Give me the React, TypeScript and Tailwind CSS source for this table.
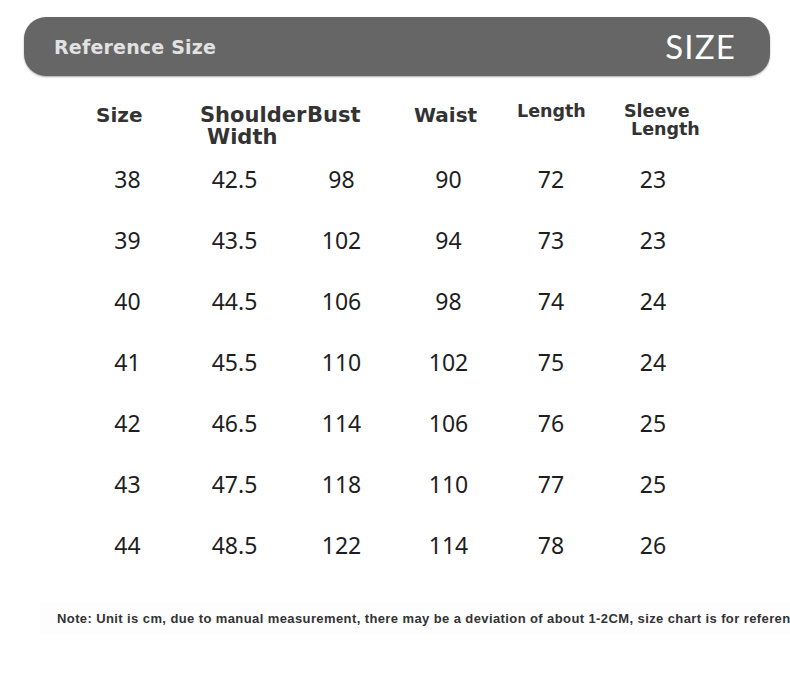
import React from "react";

const rows = [
  ["38", "42.5", "98", "90", "72", "23"],
  ["39", "43.5", "102", "94", "73", "23"],
  ["40", "44.5", "106", "98", "74", "24"],
  ["41", "45.5", "110", "102", "75", "24"],
  ["42", "46.5", "114", "106", "76", "25"],
  ["43", "47.5", "118", "110", "77", "25"],
  ["44", "48.5", "122", "114", "78", "26"],
];

const cols = "grid grid-cols-[107px_107px_107px_107px_98px_106px]";
const heavy = { fontFamily: '"DejaVu Sans", "Liberation Sans", sans-serif' };

export default function App() {
  return (
    <div className="w-[790px] h-[695px] bg-white overflow-hidden relative">
      <div className="pt-[17px] pl-[24px]">
        <div className="h-[59px] w-[746px] rounded-[22px] bg-[#666666] shadow-[0_1px_2px_rgba(0,0,0,0.35)] flex items-center justify-between pl-[30px] pr-[34px]">
          <span className="text-[19px] font-bold text-[#e2e2e2] tracking-[0.2px] mt-[1px]" style={heavy}>
            Reference Size
          </span>
          <span
            className="text-[33px] text-white tracking-[1.2px] font-normal mt-[1px]"
            style={{ fontFamily: 'Lato, "Open Sans", sans-serif' }}
          >
            SIZE
          </span>
        </div>
      </div>

      <div className="ml-[74px] mt-[12px]">
        <div className={`${cols} h-[61px] text-[#333333] font-bold whitespace-nowrap`} style={heavy}>
          <div className="pl-[22px] pt-[16px] text-[20px] leading-[22px]">Size</div>
          <div className="pl-[19px] pt-[16px] text-[21px] leading-[22px] relative z-0">
            <div>Shoulder</div>
            <div className="pl-[7px]">Width</div>
          </div>
          <div className="pl-[19px] pt-[16px] text-[21px] leading-[22px] relative z-10">Bust</div>
          <div className="pl-[19px] pt-[16px] text-[20px] leading-[22px]">Waist</div>
          <div className="pl-[15px] pt-[14px] text-[17.5px] leading-[18px]">Length</div>
          <div className="pl-[24px] pt-[14px] text-[17.5px] leading-[18px]">
            <div>Sleeve</div>
            <div className="pl-[7px]">Length</div>
          </div>
        </div>

        <div style={{ fontFamily: '"Noto Sans", sans-serif' }}>
          {rows.map((r, i) => (
            <div key={i} className={`${cols} h-[61px] items-center text-[23px] leading-[61px] text-[#1e1e1e]`}>
              {r.map((v, j) => (
                <div key={j} className="text-center">
                  {v}
                </div>
              ))}
            </div>
          ))}
        </div>
      </div>

      <div className="mt-[27px] ml-[40px] w-[750px] h-[32px] bg-[#fdfdfd] flex items-center pl-[17px] overflow-hidden">
        <span
          className="whitespace-nowrap text-[13px] font-bold text-[#333333] tracking-[0.4px]"
          style={{ fontFamily: '"Liberation Sans", Arial, sans-serif' }}
        >
          Note: Unit is cm, due to manual measurement, there may be a deviation of about 1-2CM, size chart is for reference only.
        </span>
      </div>
    </div>
  );
}
